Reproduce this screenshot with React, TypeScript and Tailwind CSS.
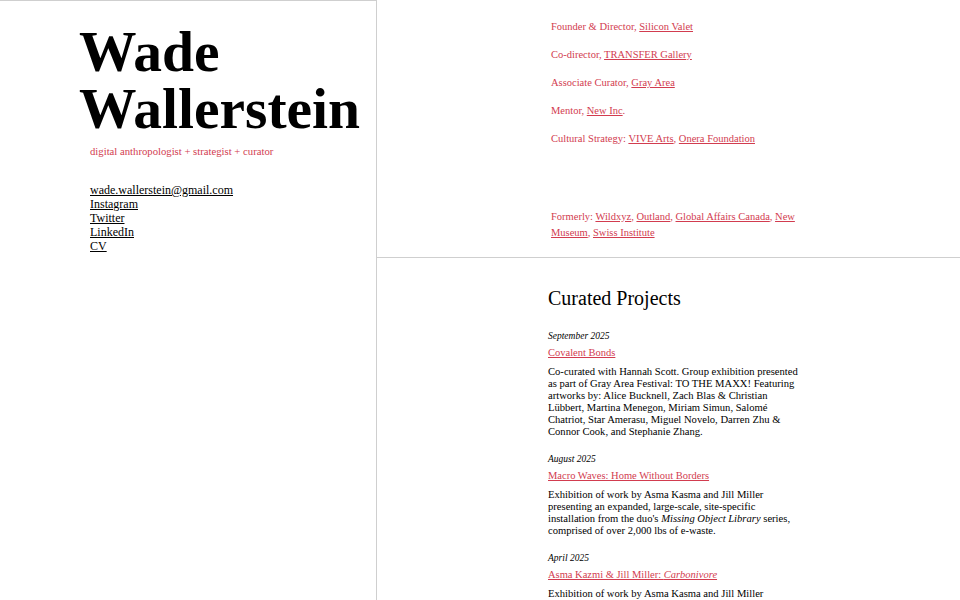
const red = "text-[#d23c4f]";

const roles: { label: string; links: string[]; end?: string }[] = [
  { label: "Founder & Director, ", links: ["Silicon Valet"] },
  { label: "Co-director, ", links: ["TRANSFER Gallery"] },
  { label: "Associate Curator, ", links: ["Gray Area"] },
  { label: "Mentor, ", links: ["New Inc"], end: "." },
  { label: "Cultural Strategy: ", links: ["VIVE Arts", "Onera Foundation"] },
];

const formerly = ["Wildxyz", "Outland", "Global Affairs Canada", "New Museum", "Swiss Institute"];

function Project({
  date,
  title,
  children,
  first,
}: {
  date: string;
  title: React.ReactNode;
  children: React.ReactNode;
  first?: boolean;
}) {
  return (
    <div className={first ? "mt-[20px]" : "mt-[15px]"}>
      <p className="italic text-[9.5px] leading-[12px]">{date}</p>
      <a href="#" className={`block mt-[4px] text-[10.5px] leading-[14px] underline ${red}`}>
        {title}
      </a>
      <p className="mt-[6px] text-[10.6px] leading-[12px] w-[256px]">{children}</p>
    </div>
  );
}

export default function App() {
  return (
    <div
      className="flex min-h-screen bg-white text-black"
      style={{ fontFamily: '"Liberation Serif", "Times New Roman", serif' }}
    >
      {/* Left: name + contact */}
      <div className="w-[377px] shrink-0 border-t border-r border-[#cfcfcf] pt-[22px]">
        <h1 className="pl-[79px] text-[57.5px] leading-[57px] font-bold">
          Wade
          <br />
          Wallerstein
        </h1>
        <p className={`pl-[90px] mt-[8px] text-[10.7px] leading-[12px] ${red}`}>
          digital anthropologist + strategist + curator
        </p>
        <div className="pl-[90px] mt-[26px] flex flex-col text-[12px] leading-[14px]">
          {["wade.wallerstein@gmail.com", "Instagram", "Twitter", "LinkedIn", "CV"].map((l) => (
            <a key={l} href="#" className="underline self-start">
              {l}
            </a>
          ))}
        </div>
      </div>

      {/* Right */}
      <div className="flex-1 flex flex-col">
        <div className={`h-[258px] border-b border-[#cfcfcf] pl-[174px] pt-[19px] text-[10.5px] leading-[16px] ${red}`}>
          {roles.map((r) => (
            <p key={r.label} className="mb-[12px]">
              {r.label}
              {r.links.map((l, i) => (
                <span key={l}>
                  {i > 0 && ", "}
                  <a href="#" className="underline">
                    {l}
                  </a>
                </span>
              ))}
              {r.end}
            </p>
          ))}
          <p className="mt-[62px] w-[262px]">
            Formerly:{" "}
            {formerly.map((l, i) => (
              <span key={l}>
                {i > 0 && ", "}
                <a href="#" className="underline">
                  {l}
                </a>
              </span>
            ))}
          </p>
        </div>

        <div className="pl-[171px] pt-[29px]">
          <h2 className="text-[20px] leading-[23px]">Curated Projects</h2>
          <Project first date="September 2025" title="Covalent Bonds">
            Co-curated with Hannah Scott. Group exhibition presented as part of Gray Area Festival: TO THE
            MAXX! Featuring artworks by: Alice Bucknell, Zach Blas &amp; Christian Lübbert, Martina Menegon,
            Miriam Simun, Salomé Chatriot, Star Amerasu, Miguel Novelo, Darren Zhu &amp; Connor Cook, and
            Stephanie Zhang.
          </Project>
          <Project date="August 2025" title="Macro Waves: Home Without Borders">
            Exhibition of work by Asma Kasma and Jill Miller presenting an expanded, large-scale,
            site-specific installation from the duo's <i>Missing Object Library</i> series, comprised of
            over 2,000 lbs of e-waste.
          </Project>
          <Project
            date="April 2025"
            title={
              <>
                Asma Kazmi &amp; Jill Miller: <i>Carbonivore</i>
              </>
            }
          >
            Exhibition of work by Asma Kasma and Jill Miller presenting a new body of work exploring
            consumption, waste and the afterlives of technology.
          </Project>
        </div>
      </div>
    </div>
  );
}
